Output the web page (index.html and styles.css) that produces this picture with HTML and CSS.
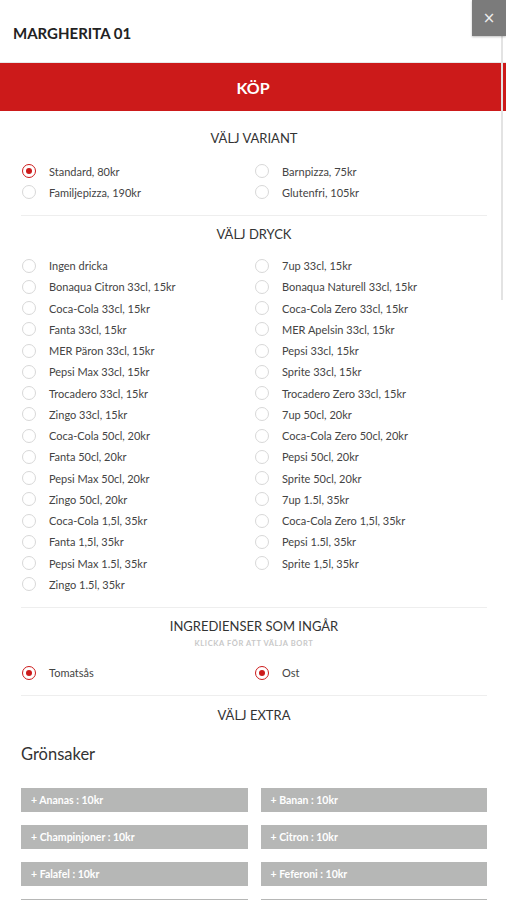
FILE: index.html
```html
<!DOCTYPE html>
<html lang="sv">
<head>
<meta charset="utf-8">
<title>Margherita 01</title>
<link rel="stylesheet" href="styles.css">
</head>
<body>
<div class="modal">
  <button class="close" aria-label="Stäng">&#215;</button>
  <div class="scroll-thumb"></div>
  <header class="head"><h1 class="title">MARGHERITA 01</h1></header>
  <div class="buy">KÖP</div>

  <section class="section first">
    <h2 class="sec-title">VÄLJ VARIANT</h2>
    <div class="radios">
      <label class="opt on"><span class="r"></span>Standard, 80kr</label>
      <label class="opt"><span class="r"></span>Barnpizza, 75kr</label>
      <label class="opt"><span class="r"></span>Familjepizza, 190kr</label>
      <label class="opt"><span class="r"></span>Glutenfri, 105kr</label>
    </div>
  </section>

  <section class="section">
    <h2 class="sec-title">VÄLJ DRYCK</h2>
    <div class="radios">
      <label class="opt"><span class="r"></span>Ingen dricka</label>
      <label class="opt"><span class="r"></span>7up 33cl, 15kr</label>
      <label class="opt"><span class="r"></span>Bonaqua Citron 33cl, 15kr</label>
      <label class="opt"><span class="r"></span>Bonaqua Naturell 33cl, 15kr</label>
      <label class="opt"><span class="r"></span>Coca-Cola 33cl, 15kr</label>
      <label class="opt"><span class="r"></span>Coca-Cola Zero 33cl, 15kr</label>
      <label class="opt"><span class="r"></span>Fanta 33cl, 15kr</label>
      <label class="opt"><span class="r"></span>MER Apelsin 33cl, 15kr</label>
      <label class="opt"><span class="r"></span>MER Päron 33cl, 15kr</label>
      <label class="opt"><span class="r"></span>Pepsi 33cl, 15kr</label>
      <label class="opt"><span class="r"></span>Pepsi Max 33cl, 15kr</label>
      <label class="opt"><span class="r"></span>Sprite 33cl, 15kr</label>
      <label class="opt"><span class="r"></span>Trocadero 33cl, 15kr</label>
      <label class="opt"><span class="r"></span>Trocadero Zero 33cl, 15kr</label>
      <label class="opt"><span class="r"></span>Zingo 33cl, 15kr</label>
      <label class="opt"><span class="r"></span>7up 50cl, 20kr</label>
      <label class="opt"><span class="r"></span>Coca-Cola 50cl, 20kr</label>
      <label class="opt"><span class="r"></span>Coca-Cola Zero 50cl, 20kr</label>
      <label class="opt"><span class="r"></span>Fanta 50cl, 20kr</label>
      <label class="opt"><span class="r"></span>Pepsi 50cl, 20kr</label>
      <label class="opt"><span class="r"></span>Pepsi Max 50cl, 20kr</label>
      <label class="opt"><span class="r"></span>Sprite 50cl, 20kr</label>
      <label class="opt"><span class="r"></span>Zingo 50cl, 20kr</label>
      <label class="opt"><span class="r"></span>7up 1.5l, 35kr</label>
      <label class="opt"><span class="r"></span>Coca-Cola 1,5l, 35kr</label>
      <label class="opt"><span class="r"></span>Coca-Cola Zero 1,5l, 35kr</label>
      <label class="opt"><span class="r"></span>Fanta 1,5l, 35kr</label>
      <label class="opt"><span class="r"></span>Pepsi 1.5l, 35kr</label>
      <label class="opt"><span class="r"></span>Pepsi Max 1.5l, 35kr</label>
      <label class="opt"><span class="r"></span>Sprite 1,5l, 35kr</label>
      <label class="opt"><span class="r"></span>Zingo 1.5l, 35kr</label>
    </div>
  </section>

  <section class="section">
    <h2 class="sec-title">INGREDIENSER SOM INGÅR</h2>
    <p class="sec-sub">KLICKA FÖR ATT VÄLJA BORT</p>
    <div class="radios ingr">
      <label class="opt on"><span class="r"></span>Tomatsås</label>
      <label class="opt on"><span class="r"></span>Ost</label>
    </div>
  </section>

  <section class="section last">
    <h2 class="sec-title">VÄLJ EXTRA</h2>
    <h3 class="group">Grönsaker</h3>
    <div class="extras">
      <button class="extra">+ Ananas : 10kr</button>
      <button class="extra">+ Banan : 10kr</button>
      <button class="extra">+ Champinjoner : 10kr</button>
      <button class="extra">+ Citron : 10kr</button>
      <button class="extra">+ Falafel : 10kr</button>
      <button class="extra">+ Feferoni : 10kr</button>
      <button class="extra" aria-label="Fler extra"></button>
      <button class="extra" aria-label="Fler extra"></button>
    </div>
  </section>
</div>
</body>
</html>
```

FILE: styles.css
```css
* { box-sizing: border-box; }
html, body { margin: 0; padding: 0; background: #fff; }
body {
  font-family: Lato, "Open Sans", "Liberation Sans", sans-serif;
  color: #444;
  overflow: hidden;
  height: 900px;
}
.modal { position: relative; width: 506px; }
.close {
  position: absolute; top: 0; right: 0;
  width: 34px; height: 36px;
  border: 0; padding: 0; margin: 0;
  background: #7b7b7b; color: #ededed;
  font-family: "DejaVu Sans", sans-serif; font-size: 15px; line-height: 36px;
  box-shadow: 0 1px 2px rgba(0,0,0,0.25);
  z-index: 3;
}
.scroll-thumb {
  position: absolute; top: 36px; left: 501px;
  width: 2px; height: 264px;
  background: #e3e3e3;
  z-index: 2;
}
.head { height: 62px; display: flex; align-items: center; padding: 0 13px; }
.title { margin: 4px 0 0; font-size: 15px; font-weight: 700; color: #222; letter-spacing: 0; }
.buy {
  height: 49px; background: #cc1a1a; color: #fff;
  display: flex; align-items: center; justify-content: center;
  font-size: 16px; font-weight: 700;
  border-top: 1px solid #e8e8e8;
}
.section {
  margin: 0 19px 0 21px;
  padding: 8px 0 12px;
  border-bottom: 1px solid #eeeeee;
}
.section.first { padding-top: 17px; }
.section.last { border-bottom: 0; padding-top: 9px; }
.sec-title {
  margin: 0; text-align: center;
  font-size: 13px; font-weight: 400; line-height: 20px; color: #333;
}
.sec-sub {
  margin: 2px 0 0; text-align: center;
  font-size: 7.5px; line-height: 11px; color: #c8c8c8; font-weight: 700;
  letter-spacing: 0.6px;
}
.radios {
  margin-top: 11px;
  display: grid; grid-template-columns: 1fr 1fr;
  grid-auto-rows: 21.25px;
}
.first .radios { margin-top: 12.5px; }
.radios.ingr { margin-top: 13px; }
.opt {
  display: flex; align-items: center;
  font-size: 11px; color: #444;
}
.r {
  width: 14px; height: 14px; border-radius: 50%;
  border: 1px solid #d8d8d8; background: #fff;
  margin: 0 13px 0 1px; flex: none;
  display: flex; align-items: center; justify-content: center;
}
.opt.on .r { border: 1.5px solid #cc1a1a; }
.opt.on .r::after {
  content: ""; width: 6px; height: 6px; border-radius: 50%; background: #cc1a1a;
}
.group {
  margin: 18px 0 0; font-size: 16.5px; font-weight: 400; line-height: 22px; color: #333;
}
.extras {
  margin-top: 23px;
  display: grid; grid-template-columns: 1fr 1fr;
  column-gap: 13px; row-gap: 13px;
}
.extra {
  height: 24px; border: 0; margin: 0;
  background: #b6b7b6; color: #fff;
  font-family: inherit; font-size: 10.5px; font-weight: 700;
  text-align: left; padding: 0 10px;
}
```
